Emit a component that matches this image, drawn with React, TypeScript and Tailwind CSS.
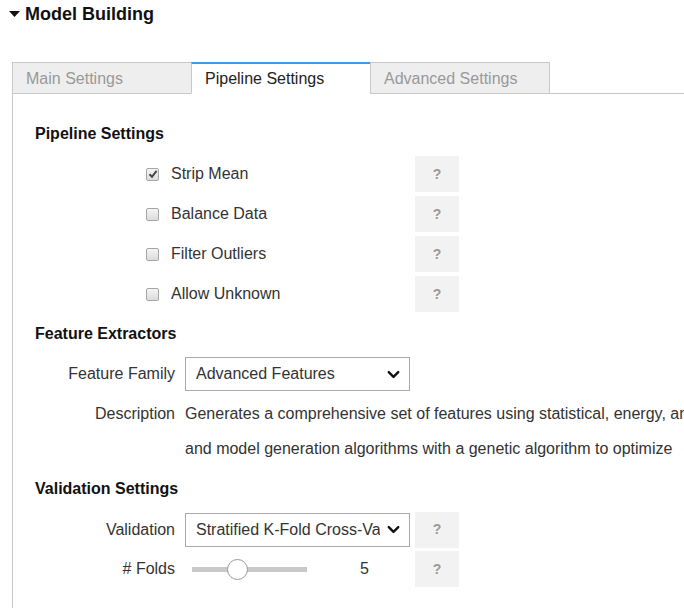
import React from "react";
import { ChevronDown } from "lucide-react";

const HelpButton = () => (
  <div className="ml-[5px] flex h-[36px] w-[44px] items-center justify-center bg-[#f2f2f2] text-[14px] font-bold text-[#999]">
    ?
  </div>
);

const Checkbox = ({ checked }: { checked?: boolean }) => (
  <div className="flex h-[13px] w-[13px] items-center justify-center rounded-[2px] border border-[#a6a6a6] bg-gradient-to-b from-[#f4f4f4] to-[#dcdcdc]">
    {checked && (
      <svg width="10" height="10" viewBox="0 0 10 10">
        <path d="M1.5 5.2 L4 7.8 L8.6 1.8" fill="none" stroke="#444" strokeWidth="2" />
      </svg>
    )}
  </div>
);

const CheckRow = ({ label, checked }: { label: string; checked?: boolean }) => (
  <div className="flex h-10 items-center">
    <div className="flex w-[375px] items-center pl-[111px]">
      <Checkbox checked={checked} />
      <span className="ml-[12px] text-[#333]">{label}</span>
    </div>
    <HelpButton />
  </div>
);

const Heading = ({ children }: { children: React.ReactNode }) => (
  <div className="flex h-10 items-center font-bold text-[#111]">{children}</div>
);

const Select = ({ value }: { value: string }) => (
  <div className="flex h-[34px] w-[225px] items-center border border-[#aaa] bg-white pl-[10px] pr-[6px] text-[#333]">
    <span className="flex-1 overflow-hidden whitespace-nowrap">{value}</span>
    <ChevronDown size={19} strokeWidth={3} className="ml-[4px] shrink-0 text-[#111]" />
  </div>
);

const Label = ({ children }: { children: React.ReactNode }) => (
  <div className="w-[150px] shrink-0 pr-[10px] text-right text-[#333]">{children}</div>
);

export default function App() {
  return (
    <div
      className="h-[608px] w-full overflow-hidden bg-white text-[16px]"
      style={{ fontFamily: '"Liberation Sans", Arial, sans-serif' }}
    >
      <div className="flex h-[28px] items-center pl-[9px]">
        <svg width="11" height="6" viewBox="0 0 11 6" className="mr-[5px]">
          <path d="M0 0 L11 0 L5.5 6 Z" fill="#111" />
        </svg>
        <span className="text-[18px] font-bold text-[#111]">Model Building</span>
      </div>

      <div className="ml-[12px] mt-[34px] w-[900px]">
        <div className="flex border-b border-[#c8c8c8]">
          <div className="-mb-px flex h-[32px] w-[180px] items-center border border-[#c8c8c8] bg-[#eeeeee] pl-[13px] pt-[1px] text-[#999]">
            Main Settings
          </div>
          <div className="-mb-px -ml-px flex h-[32px] w-[180px] items-center border border-t-2 border-[#c8c8c8] border-t-[#3b9be8] border-b-white bg-white pl-[13px] pt-[1px] text-[#222]">
            Pipeline Settings
          </div>
          <div className="-mb-px -ml-px flex h-[32px] w-[180px] items-center border border-[#c8c8c8] bg-[#eeeeee] pl-[13px] pt-[1px] text-[#999]">
            Advanced Settings
          </div>
        </div>

        <div className="border-l border-[#c8c8c8] pl-[22px] pt-[20px] pb-[20px]">
          <Heading>Pipeline Settings</Heading>
          <CheckRow label="Strip Mean" checked />
          <CheckRow label="Balance Data" />
          <CheckRow label="Filter Outliers" />
          <CheckRow label="Allow Unknown" />

          <Heading>Feature Extractors</Heading>
          <div className="flex h-10 items-center">
            <Label>Feature Family</Label>
            <Select value="Advanced Features" />
          </div>
          <div className="flex pt-[2px] leading-[35px]">
            <Label>Description</Label>
            <div className="whitespace-nowrap text-[#333]">
              <div>Generates a comprehensive set of features using statistical, energy, and</div>
              <div>and model generation algorithms with a genetic algorithm to optimize</div>
            </div>
          </div>

          <div className="mt-[3px]">
            <Heading>Validation Settings</Heading>
          </div>
          <div className="flex h-10 items-center pt-[1px]">
            <Label>Validation</Label>
            <Select value="Stratified K-Fold Cross-Validation" />
            <HelpButton />
          </div>
          <div className="flex h-10 items-center">
            <Label># Folds</Label>
            <div className="flex w-[225px] items-center">
              <div className="relative ml-[7px] h-[5px] w-[115px] bg-[#c8c8c8]">
                <div className="absolute left-[35px] top-[-8px] h-[21px] w-[21px] rounded-full border border-[#999] bg-white" />
              </div>
              <span className="ml-[53px] text-[#333]">5</span>
            </div>
            <HelpButton />
          </div>
        </div>
      </div>
    </div>
  );
}
